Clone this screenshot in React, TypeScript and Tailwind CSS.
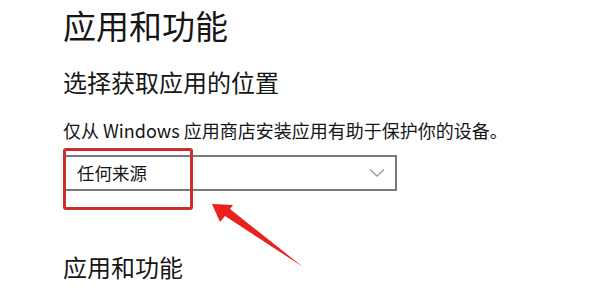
import React from "react";

export default function App() {
  return (
    <div
      className="relative w-[590px] h-[297px] overflow-hidden bg-white pl-[63px] text-[#161616]"
      style={{ fontFamily: '"Noto Sans CJK SC", "Microsoft YaHei", "Noto Sans", sans-serif' }}
    >
      <h1 className="mt-[5px] text-[33px] leading-[40px] font-normal">应用和功能</h1>
      <h2 className="mt-[21px] text-[24px] leading-[32px] font-normal">选择获取应用的位置</h2>
      <p className="mt-[20px] text-[18px] leading-[24px]">
        仅从 Windows 应用商店安装应用有助于保护你的设备。
      </p>
      <div className="mt-[13px] flex h-[36px] w-[334px] items-center justify-between border-2 border-[#7a7a7a] pl-[12px] pr-[10px]">
        <span className="text-[17.5px] leading-[24px]">任何来源</span>
        <svg width="16" height="10" viewBox="0 0 16 10" fill="none">
          <path d="M1 1.5 L8 8 L15 1.5" stroke="#9a9a9a" strokeWidth="1.3" />
        </svg>
      </div>
      <h2 className="mt-[60px] text-[24px] leading-[32px] font-normal">应用和功能</h2>

      <div className="absolute left-[63px] top-[148px] h-[62px] w-[130px] rounded-[3px] border-[3px] border-[#c8302c]" />
      <svg className="absolute left-0 top-0" width="590" height="297" viewBox="0 0 590 297">
        <polygon
          points="212,204 233,205 230,209 303,267 225,216 220,222"
          fill="#e8231e"
          strokeLinejoin="round"
        />
      </svg>
    </div>
  );
}
